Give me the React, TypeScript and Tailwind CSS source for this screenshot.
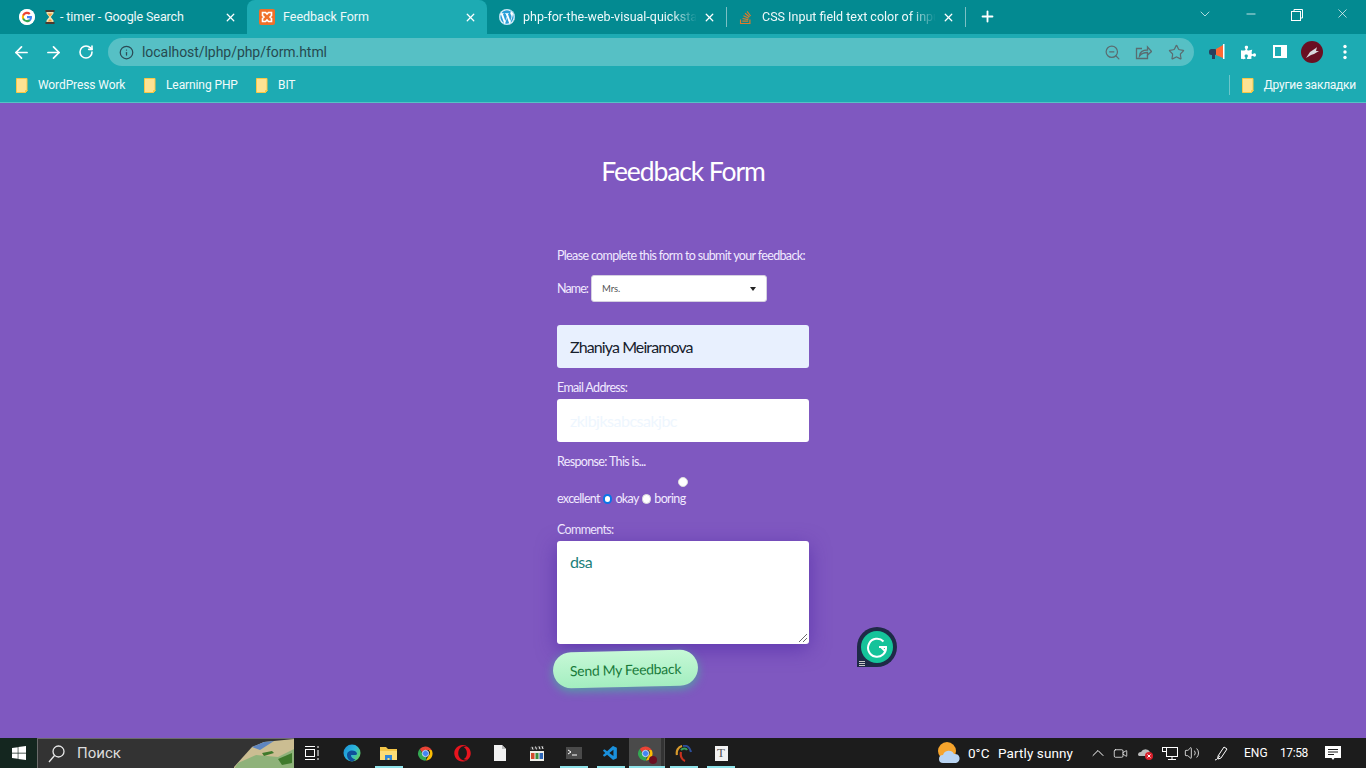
import React from "react";
import { ArrowLeft, ArrowRight, RotateCw, Info, X, Plus, ChevronDown, Minus, ZoomOut, Star, ChevronUp, Video, Volume2 } from "lucide-react";
import { FaWordpress, FaStackOverflow, FaWindows, FaOpera, FaPuzzlePiece } from "react-icons/fa";
import { VscVscode } from "react-icons/vsc";

const ui = "font-['Roboto',sans-serif]";
const dosis = "font-['Lato',sans-serif]";

function ChromeLogo({ size = 20 }: { size?: number }) {
  return (
    <svg width={size} height={size} viewBox="0 0 48 48">
      <path d="M24 4a20 20 0 0 1 17.3 10H24a10 10 0 0 0-9.5 6.9L7.7 11.2A20 20 0 0 1 24 4z" fill="#ea4335" />
      <path d="M41.3 14A20 20 0 0 1 25 44l8.6-15A10 10 0 0 0 33 14z" fill="#fbbc04" />
      <path d="M7.7 11.2 16 25.5A10 10 0 0 0 27 33.5L25 44A20 20 0 0 1 7.7 11.2z" fill="#34a853" />
      <circle cx="24" cy="24" r="9" fill="#4285f4" stroke="#fff" strokeWidth="2" />
    </svg>
  );
}

function GoogleG() {
  return (
    <svg width="16" height="16" viewBox="0 0 48 48" className="rounded-full bg-white">
      <circle cx="24" cy="24" r="24" fill="#fff" />
      <path d="M39 24.5c0-1.200-.1-2.300-.3-3.300H24v6.300h8.400a7.200 7.200 0 0 1-3.100 4.700v3.900h5A15 15 0 0 0 39 24.500z" fill="#4285f4" />
      <path d="M24 39.500c4.200 0 7.700-1.400 10.300-3.800l-5-3.900c-1.400.9-3.200 1.500-5.300 1.500-4.100 0-7.500-2.700-8.800-6.400H10v4A15.500 15.500 0 0 0 24 39.500z" fill="#34a853" />
      <path d="M15.200 26.900a9.300 9.300 0 0 1 0-5.900v-4H10a15.500 15.500 0 0 0 0 13.900z" fill="#fbbc04" />
      <path d="M24 14.700c2.300 0 4.400.8 6 2.300l4.500-4.500A15.500 15.500 0 0 0 10 17l5.200 4c1.300-3.600 4.700-6.300 8.800-6.300z" fill="#ea4335" />
    </svg>
  );
}

function Hourglass() {
  return (
    <svg width="10" height="14" viewBox="0 0 10 14" className="shrink-0">
      <rect x="0.500" y="0" width="9" height="2" fill="#4a3a30" />
      <rect x="0.500" y="12" width="9" height="2" fill="#4a3a30" />
      <path d="M1.500 2h7v1.500L5.800 7l2.700 3.500V12h-7v-1.500L4.200 7 1.500 3.500z" fill="#f5e3b0" />
      <path d="M2.500 3.500h5L5 6.500zM2.500 11.500 5 9l2.500 2.500z" fill="#f29a38" />
    </svg>
  );
}

function Xampp() {
  return (
    <svg width="16" height="16" viewBox="0 0 16 16">
      <rect width="16" height="16" rx="2" fill="#f0702a" />
      <path d="M3.500 3.500h3l1.500 1.500 1.500-1.500h3v3L11 8l1.500 1.500v3h-3L8 11l-1.500 1.500h-3v-3L5 8 3.500 6.500z" fill="none" stroke="#fff" strokeWidth="1.600" />
    </svg>
  );
}

function EdgeLogo() {
  return (
    <svg width="18" height="18" viewBox="0 0 18 18">
      <defs>
        <linearGradient id="edgeFill" x1="0" y1="0" x2="1" y2="0.600">
          <stop offset="0" stopColor="#1a8fd8" />
          <stop offset="0.600" stopColor="#2bb6dc" />
          <stop offset="1" stopColor="#5fd06a" />
        </linearGradient>
      </defs>
      <circle cx="9" cy="9" r="8.500" fill="url(#edgeFill)" />
      <path d="M4 11c0-3 2.500-4.500 5-4.500 2.500 0 4.500 1.200 5 3 .2 1-1 1.500-3 1.500H8c-.2 2 1.500 4 4.500 4.500A8.500 8.500 0 0 1 9 17.500C6 17 4 14 4 11z" fill="#0e4f9a" />
    </svg>
  );
}

function Tab({ icon, title, active, sep, fade, w = 240 }: { icon: React.ReactNode; title: React.ReactNode; active?: boolean; sep?: boolean; fade?: boolean; w?: number }) {
  return (
    <div className={`relative flex h-[34px] shrink-0 items-center pl-[12px] pr-[8px] rounded-t-[8px] ${active ? "bg-[#1dabb3]" : ""}`} style={{ width: w }}>
      <div className="flex w-[24px] shrink-0 items-center">{icon}</div>
      <div className={`flex min-w-0 flex-1 items-center overflow-hidden whitespace-nowrap text-[12.5px] text-[#eef9fa] ${ui} ${fade ? "[mask-image:linear-gradient(to_right,black_85%,transparent)]" : ""}`}>{title}</div>
      <X size={13} strokeWidth={2.4} className="ml-[6px] mr-[2px] shrink-0 text-white" />
      {sep && <div className="absolute right-[-1px] top-[7px] h-[20px] w-px bg-[#7cc0c4]" />}
    </div>
  );
}

function Folder() {
  return (
    <svg width="12" height="15" viewBox="0 0 12 15" className="shrink-0">
      <path d="M.500.500h10.500v12.500l-1.500 1.500H.500z" fill="#fde293" stroke="#f9c846" />
      <path d="M9.500 14.500v-2h2" fill="#f9c846" stroke="#f9c846" />
    </svg>
  );
}

function Bookmark({ label, w }: { label: string; w: number }) {
  return (
    <div className="flex items-center" style={{ width: w }}>
      <Folder />
      <span className={`ml-[10px] text-[12px] tracking-[-.1px] text-[#f2fbfb] ${ui}`}>{label}</span>
    </div>
  );
}

function Radio({ checked }: { checked?: boolean }) {
  return (
    <span className={`inline-block h-[9.500px] w-[9.500px] shrink-0 rounded-full bg-white ${checked ? "border-[2px] border-[#0b74e8]" : "border border-[#dcdcdc]"}`} />
  );
}

function Chrome() {
  return (
    <div className={`bg-[#1dabb3] ${ui}`}>
      <div className="flex h-[34px] items-start bg-[#038a91]">
        <div className="w-[7px] shrink-0" />
        <Tab
          icon={<GoogleG />}
          title={<span className="flex items-center"><span className="ml-[2px] mr-[5px] flex"><Hourglass /></span><span className="tracking-[-.1px]">- timer - Google Search</span></span>}
        />
        <Tab icon={<Xampp />} title="Feedback Form" active />
        <Tab w={239} icon={<FaWordpress size={16} className="rounded-full bg-white text-[#2a9fd8]" />} title="php-for-the-web-visual-quickstart-guide" sep fade />
        <Tab w={239} icon={<FaStackOverflow size={15} className="text-[#e07a2a]" />} title="CSS Input field text color of input" sep fade />
        <Plus size={17} strokeWidth={2.6} className="ml-[14px] mt-[8px] text-white" />
        <div className="flex-1" />
        <ChevronDown size={16} strokeWidth={1.2} className="mr-[31px] mt-[6px] text-[#d9f0f1]" />
        <Minus size={14} strokeWidth={1.3} className="mr-[33px] mt-[7px] text-white" />
        <svg width="12" height="12" viewBox="0 0 12 12" className="mr-[32px] mt-[9px]" fill="none" stroke="#fff">
          <rect x=".5" y="2.500" width="9" height="9" />
          <path d="M3 2.500V.5h8.500V9H9.500" />
        </svg>
        <X size={15} strokeWidth={1.1} className="mr-[16px] mt-[6px] text-white" />
      </div>
      <div className="flex h-[36px] items-center">
        <ArrowLeft size={19} strokeWidth={2.2} className="ml-[12px] text-white" />
        <ArrowRight size={19} strokeWidth={2.2} className="ml-[13px] text-white" />
        <RotateCw size={16} strokeWidth={2.4} className="ml-[15px] text-white" />
        <div className="ml-[14px] flex h-[28px] w-[1086px] items-center rounded-full bg-[#56c0c5] pl-[11px] pr-[9px]">
          <Info size={15} strokeWidth={2} className="text-[#2b4a55]" />
          <span className="ml-[8px] text-[14px] tracking-[-.05px] text-[#264a50]">localhost/lphp/php/form.html</span>
          <div className="flex-1" />
          <ZoomOut size={17} strokeWidth={1.7} className="text-[#5a6c70]" />
          <svg width="17" height="17" viewBox="0 0 17 17" className="ml-[14px]" fill="none" stroke="#5a6c70" strokeWidth="1.300">
            <path d="M7 4.500H1.500v10h11V11" />
            <path d="M4.500 12c.3-4 3-6 8-6V3l4 4.500-4 3.500V8.500c-3 0-6 .8-8 3.500z" />
          </svg>
          <Star size={17} strokeWidth={1.7} className="ml-[16px] text-[#5a6c70]" />
        </div>
        <svg width="18" height="18" viewBox="0 0 18 18" className="ml-[14px]">
          <rect x="1" y="6" width="8" height="6" rx="2.500" fill="#2b3f5c" />
          <path d="M4 12h3v4H4z" fill="#2b3f5c" />
          <path d="M8 6l7-4v13l-7-3z" fill="#ff6a33" />
          <rect x="15" y="1" width="1.500" height="15" fill="#fff" />
        </svg>
        <FaPuzzlePiece size={15} className="ml-[15px] text-white" />
        <svg width="15" height="14" viewBox="0 0 15 14" className="ml-[17px]">
          <rect width="14" height="13" fill="#fff" />
          <rect x="2" y="2" width="6" height="9" fill="#1dabb3" />
        </svg>
        <svg width="22" height="22" viewBox="0 0 22 22" className="ml-[13px]">
          <circle cx="11" cy="11" r="11" fill="#6a0f22" />
          <path d="M5 17l4-6 6-4 1-1-1 4 3 0-5 3-3 1z" fill="#d8d8dc" />
        </svg>
        <svg width="4" height="16" viewBox="0 0 4 16" className="ml-[20px]" fill="#fff">
          <circle cx="2" cy="2.500" r="1.700" />
          <circle cx="2" cy="8" r="1.700" />
          <circle cx="2" cy="13.500" r="1.700" />
        </svg>
      </div>
      <div className="flex h-[32px] items-center pb-[2px] pl-[16px]">
        <Bookmark label="WordPress Work" w={128} />
        <Bookmark label="Learning PHP" w={112} />
        <Bookmark label="BIT" w={100} />
        <div className="flex-1" />
        <div className="mr-[12px] h-[20px] w-px bg-[#6cc6ca]" />
        <Folder />
        <span className="ml-[10px] mr-[10px] text-[12px] tracking-[-.25px] text-[#f2fbfb]">Другие закладки</span>
      </div>
      <div className="h-px bg-[#55c2c4]" />
    </div>
  );
}

function Form() {
  const label = "text-[12.500px] leading-[16px] tracking-[-.65px] text-[#f1e9ff]";
  return (
    <main className={`relative flex h-[635px] flex-col items-center bg-[#7f58c0] ${dosis}`}>
      <h1 className="mt-[51px] text-[26.500px] leading-[34px] tracking-[-1.100px] text-white">Feedback Form</h1>
      <form className="mt-[60px] flex w-[252px] flex-col items-start">
        <p className={`${label} whitespace-nowrap`}>Please complete this form to submit your feedback:</p>
        <div className="mt-[11px] flex h-[27px] items-center">
          <span className={`${label} w-[34px] !tracking-[-.9px]`}>Name:</span>
          <div className="flex h-[27px] w-[176px] items-center justify-between rounded-[3px] border border-[#d5d0e0] bg-white pl-[10px] pr-[10px]">
            <span className="pt-[1px] text-[9.500px] tracking-[-.1px] text-[#555]">Mrs.</span>
            <span className="h-0 w-0 border-x-[3.500px] border-t-[4px] border-x-transparent border-t-[#222]" />
          </div>
        </div>
        <div className="mt-[23px] flex h-[43px] w-[252px] items-center rounded-[3px] bg-[#e8f0fe] px-[13px] text-[16px] tracking-[-.9px] text-[#16202c]">Zhaniya Meiramova</div>
        <label className={`${label} mt-[12px]`}>Email Address:</label>
        <div className="mt-[3px] flex h-[43px] w-[252px] items-center rounded-[3px] bg-white px-[13px] text-[16px] tracking-[-.5px] text-[#eef6fe]">zklbjksabcsakjbc</div>
        <label className={`${label} mt-[12px]`}>Response: This is...</label>
        <div className={`${label} relative mt-[21px] flex w-[252px] items-center gap-[3px]`}>
          <span>excellent</span>
          <Radio checked />
          <span>okay</span>
          <Radio />
          <span>boring</span>
          <span className="absolute left-[121px] top-[-14px] flex"><Radio /></span>
        </div>
        <label className={`${label} mt-[15px]`}>Comments:</label>
        <div className="relative mt-[3px] h-[103px] w-[252px] rounded-[3px] bg-white px-[13px] pt-[11px] text-[16px] leading-[20px] tracking-[-.6px] text-[#1d7f7a] shadow-[0_5px_20px_rgba(70,30,160,0.55)]">
          dsa
          <svg width="10" height="10" viewBox="0 0 10 10" className="absolute bottom-[1px] right-[1px]" stroke="#444" strokeWidth=".8">
            <path d="M1 9 9 1M5 9l4-4" />
          </svg>
        </div>
        <button type="button" className="ml-[-4px] mt-[7px] h-[36px] w-[145px] -rotate-[1.300deg] rounded-full bg-gradient-to-b from-[#c6f8d6] to-[#a3eec0] text-[14px] tracking-[-.3px] text-[#187a3a] shadow-[0_3px_10px_rgba(60,200,150,0.65)]">
          Send My Feedback
        </button>
      </form>
      <div className="absolute left-[857px] top-[524px] flex h-[40px] w-[40px] items-center justify-center rounded-full rounded-bl-[3px] bg-[#1e2a47]">
        <div className="flex h-[32px] w-[32px] items-center justify-center rounded-full bg-[#15c39a]">
          <svg width="22" height="22" viewBox="0 0 22 22" fill="none" stroke="#fff" strokeWidth="2">
            <path d="M17.500 5.500A9 9 0 1 0 20 11h-7M15 11l4 4" />
          </svg>
        </div>
        <span className="absolute bottom-[1px] left-[2px] h-[6px] w-[6px] bg-[repeating-linear-gradient(0deg,#c8c8c8_0_1px,transparent_1px_2px)]" />
      </div>
    </main>
  );
}

function Bar({ w, active, on, children }: { w: number; active?: boolean; on?: boolean; children: React.ReactNode }) {
  return (
    <div className={`relative flex h-[30px] shrink-0 items-center justify-center ${active ? "bg-[#4a4a4a]" : ""}`} style={{ width: w }}>
      {children}
      {on && <span className={`absolute bottom-0 h-[2px] bg-[#8fe3ea] ${active ? "left-0 right-0" : "left-[4.500px] right-[4.500px]"}`} />}
    </div>
  );
}

function Taskbar() {
  return (
    <footer className={`flex h-[30px] items-center bg-[#1c1c1c] text-white ${ui}`}>
      <div className="flex h-[30px] w-[37px] items-center justify-center bg-[#14261f]">
        <FaWindows size={16} className="text-white" />
      </div>
      <div className="relative flex h-[30px] w-[257px] items-center overflow-hidden border-l border-t border-[#6b6b6b] bg-[#333] pl-[10px]">
        <svg width="17" height="18" viewBox="0 0 17 18" fill="none" stroke="#e8e8e8" strokeWidth="1.300">
          <circle cx="10.500" cy="6.500" r="5.500" />
          <path d="M6.500 10.500 1 17" />
        </svg>
        <span className="ml-[12px] text-[15px] text-[#dcdcdc]">Поиск</span>
        <svg width="60" height="30" viewBox="0 0 60 30" className="absolute right-0 top-0">
          <path d="M0 28 18 8l12-5 30-3v30H0z" fill="#cbbd92" />
          <path d="M18 8l12-5 10-1-14 9z" fill="#5f86c0" />
          <path d="M4 24l18-8 22 2 16-8v20H0z" fill="#8fb27a" />
          <path d="M28 14l10-2 2 2-10 3zM44 20l14-6v10l-10 2z" fill="#3f7a2c" />
        </svg>
      </div>
      <div className="flex flex-1 items-center">
        <Bar w={36}>
          <svg width="16" height="16" viewBox="0 0 16 16" fill="none" stroke="#fff"><rect x="1.500" y="4.500" width="9" height="7" /><path d="M1 1.500h10M1 14.500h10M14 1v2M14 5v6M14 13v2" /></svg>
        </Bar>
        <div className="w-[3px] shrink-0" />
        <Bar w={37}><EdgeLogo /></Bar>
        <Bar w={37} on>
          <svg width="17" height="15" viewBox="0 0 17 15"><path d="M0 1h6l2 2h9v11H0z" fill="#f4c648" /><path d="M0 5h17v9H0z" fill="#fbdc76" /><path d="M5 9h7v5H9.500v-2h-2v2H5z" fill="#2f86d8" /></svg>
        </Bar>
        <Bar w={37}><ChromeLogo size={17} /></Bar>
        <Bar w={37}><FaOpera size={17} className="text-[#e8141e]" /></Bar>
        <Bar w={37}>
          <svg width="12" height="16" viewBox="0 0 12 16"><path d="M0 0h8l4 4v12H0z" fill="#f2f2f2" /><path d="M8 0v4h4z" fill="#bcbcbc" /></svg>
        </Bar>
        <Bar w={37}>
          <svg width="14" height="15" viewBox="0 0 14 15"><rect y="5" width="14" height="10" fill="#f0efe8" /><path d="M0 1l14-1v3L0 4z" fill="#333" /><path d="M2 .8l1 2.800M5.500.6l1 2.800M9 .4l1 2.800M12 .2l1 2.800" stroke="#eee" /><rect x="1" y="7" width="3.500" height="6" fill="#d24a2c" /><rect x="5.500" y="7" width="3" height="6" fill="#3b8f3f" /><rect x="9.500" y="7" width="3.500" height="6" fill="#2d66b8" /></svg>
        </Bar>
        <Bar w={37} on>
          <svg width="16" height="12" viewBox="0 0 16 12"><rect width="16" height="12" fill="#4a4a4a" /><path d="M2 3l3 2-3 2M6 8h5" stroke="#fff" fill="none" /></svg>
        </Bar>
        <Bar w={37} on><VscVscode size={17} className="text-[#1a90dc]" /></Bar>
        <Bar w={36} active on>
          <div className="relative mr-[3px]"><ChromeLogo size={17} /><span className="absolute bottom-[-2px] right-[-3px] h-[8px] w-[8px] rounded-full bg-[#6a0f22]" /></div>
          <span className="absolute bottom-0 right-[1px] top-0 w-[3px] bg-[#333]" />
        </Bar>
        <Bar w={37} on>
          <svg width="17" height="17" viewBox="0 0 17 17" fill="none" strokeWidth="2.200"><path d="M7 1C3 2 1 6 2 10" stroke="#d89a2c" /><path d="M8 1c4-1 7 2 8 6" stroke="#2c4f9c" /><path d="M6 5c2-2 5-2 6 0" stroke="#3aa05a" /><path d="M6 7c-1 4 1 8 4 9" stroke="#c8321e" /></svg>
        </Bar>
        <Bar w={37} on>
          <span className="ml-[1px] flex h-[15px] w-[13px] items-center justify-center bg-[#f2f2f2] font-['Liberation_Serif',serif] text-[13px] text-[#555]">T</span>
        </Bar>
      </div>
      <div className="flex h-[30px] items-center">
        <svg width="24" height="24" viewBox="0 0 24 24" className="mr-[7px]">
          <circle cx="10" cy="10" r="9" fill="#f6a42c" />
          <path d="M6 22a4 4 0 0 1 0-8 6 6 0 0 1 11-1 4.500 4.500 0 0 1 2 9z" fill="#b9d4f2" />
        </svg>
        <span className="w-[30px] text-[13.500px]">0°C</span>
        <span className="w-[90px] text-[13.500px] tracking-[.1px]">Partly sunny</span>
        <ChevronUp size={20} strokeWidth={1.2} className="mr-[5px] text-white" />
        <Video size={15} strokeWidth={1.2} className="mr-[9px] text-white" />
        <svg width="17" height="14" viewBox="0 0 17 14" className="mr-[7px]">
          <path d="M1 9a3 3 0 0 1 3-3 5 5 0 0 1 9 0v4H2z" fill="#bcbcbc" />
          <circle cx="12" cy="10" r="4" fill="#d9202c" />
          <path d="M10.500 8.500l3 3M13.500 8.500l-3 3" stroke="#fff" />
        </svg>
        <svg width="17" height="15" viewBox="0 0 17 15" className="mr-[6px]" fill="none" stroke="#fff"><rect x="5.500" y="1.500" width="11" height="9" /><rect x="1.500" y="1.500" width="4" height="4" fill="#1c1c1c" /><path d="M11 10.500v3M7 13.500h8" /></svg>
        <Volume2 size={16} strokeWidth={1.2} className="mr-[13px] text-white" />
        <svg width="17" height="17" viewBox="0 0 17 17" className="mr-[14px]" fill="none" stroke="#fff"><path d="M11 2l3 2-6 9-3 1 0-3zM2 15c3 0 2-3 5-4" /></svg>
        <span className="w-[36px] text-[12px]">ENG</span>
        <span className="w-[45px] text-[12px] tracking-[-.4px]">17:58</span>
        <svg width="16" height="15" viewBox="0 0 16 15" className="mr-[25px]" fill="#fff"><path d="M0 0h16v12H9.500L8 14l-1.500-2H0z" /><path d="M3 3.500h10M3 6h10M3 8.500h6" stroke="#1c1c1c" /></svg>
      </div>
    </footer>
  );
}

export default function App() {
  return (
    <div className="h-[768px] w-[1366px] overflow-hidden">
      <Chrome />
      <Form />
      <Taskbar />
    </div>
  );
}
